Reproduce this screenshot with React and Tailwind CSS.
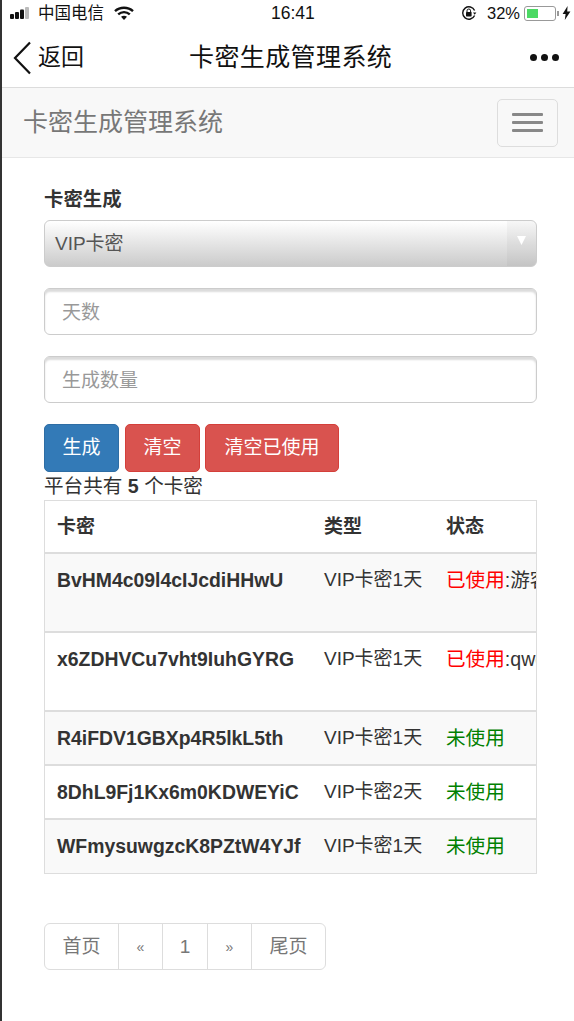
const rows = [
  { card: 'BvHM4c09l4cIJcdiHHwU', type: 'VIP卡密1天', used: '游客1', tall: true, odd: true },
  { card: 'x6ZDHVCu7vht9IuhGYRG', type: 'VIP卡密1天', used: 'qwe', tall: true },
  { card: 'R4iFDV1GBXp4R5lkL5th', type: 'VIP卡密1天', odd: true },
  { card: '8DhL9Fj1Kx6m0KDWEYiC', type: 'VIP卡密2天' },
  { card: 'WFmysuwgzcK8PZtW4YJf', type: 'VIP卡密1天', odd: true },
];

function StatusBar() {
  return (
    <div className="flex h-[28px] items-center pl-[8px] pr-[3px] pb-[2px] text-[16.5px] text-[#111]">
      <div className="flex w-[261px] items-center">
        <svg width="23" height="14" viewBox="0 0 23 14" className="mr-[5px]">
          <rect x="0" y="8" width="4" height="5" rx="1" fill="#111" />
          <rect x="5" y="6" width="4" height="7" rx="1" fill="#111" />
          <rect x="10" y="3.5" width="4" height="9.5" rx="1" fill="#111" />
          <rect x="15" y="1" width="4" height="12" rx="1" fill="#bbb" />
        </svg>
        <span>中国电信</span>
        <svg width="20" height="15" viewBox="0 0 20 15" className="ml-[10px]" fill="none" stroke="#111" strokeWidth="2.4">
          <path d="M1 5.2C6 .6 14 .6 19 5.2" />
          <path d="M4.2 8.4c3.3-3 8.3-3 11.6 0" />
          <path d="M10 14l3-3.2c-1.7-1.5-4.3-1.5-6 0z" fill="#111" stroke="none" />
        </svg>
      </div>
      <span className="w-[44px] whitespace-nowrap text-[17.5px] font-medium">16:41</span>
      <div className="ml-auto flex items-center">
        <svg width="16" height="16" viewBox="0 0 16 16" fill="none" stroke="#111" strokeWidth="1.4">
          <path d="M13.6 10.5A6.2 6.2 0 1 1 13.6 5.5" />
          <path d="M12 7.6h3.4l-1.7 2.2z" fill="#111" stroke="none" />
          <rect x="5" y="7" width="5.6" height="4.4" rx=".6" fill="#111" stroke="none" />
          <path d="M6 7V5.8a1.8 1.8 0 0 1 3.6 0V7" strokeWidth="1" />
        </svg>
        <span className="ml-[10px]">32%</span>
        <div className="ml-[4px] flex h-[15px] w-[32px] items-center rounded-[3px] border border-[#999] p-[2px]">
          <div className="h-full w-[11px] bg-[#4cd964]" />
        </div>
        <div className="ml-[1px] h-[5px] w-[2px] bg-[#999]" />
        <svg width="9" height="14" viewBox="0 0 9 14" className="ml-[3px]">
          <path d="M5.6 0L.6 8h3L2.8 14 8.4 5.6h-3.2z" fill="#111" />
        </svg>
      </div>
    </div>
  );
}

function TopNav() {
  return (
    <div className="flex h-[60px] items-center border-b border-[#dcdcdc] pl-[10px] pr-[15px]">
      <svg width="20" height="34" viewBox="0 0 20 34" fill="none" stroke="#111" strokeWidth="2.2">
        <path d="M18 1.5L3 17l15 15.5" />
      </svg>
      <span className="ml-[6px] w-[151px] text-[23px] text-[#111]">返回</span>
      <span className="whitespace-nowrap text-[25px] tracking-[0.4px] text-[#111]">卡密生成管理系统</span>
      <div className="ml-auto flex gap-[4px]">
        <div className="h-[7px] w-[7px] rounded-full bg-[#111]" />
        <div className="h-[7px] w-[7px] rounded-full bg-[#111]" />
        <div className="h-[7px] w-[7px] rounded-full bg-[#111]" />
      </div>
    </div>
  );
}

function Navbar() {
  return (
    <div className="flex h-[70px] items-center justify-between border-b border-[#e7e7e7] bg-[#f8f8f8] pl-[21px] pr-[16px]">
      <span className="whitespace-nowrap text-[25px] text-[#777]">卡密生成管理系统</span>
      <button className="flex h-[48px] w-[61px] flex-col items-center justify-center gap-[5px] rounded-[5px] border border-[#ddd]">
        <span className="h-[3px] w-[31px] rounded-[1px] bg-[#888]" />
        <span className="h-[3px] w-[31px] rounded-[1px] bg-[#888]" />
        <span className="h-[3px] w-[31px] rounded-[1px] bg-[#888]" />
      </button>
    </div>
  );
}

function TextField({ placeholder }) {
  return (
    <input
      placeholder={placeholder}
      className="block h-[47px] w-full rounded-[6px] border border-[#ccc] px-[17px] pt-[2px] text-[19px] shadow-[inset_0_3px_2px_rgba(0,0,0,0.14)] outline-none placeholder:text-[#999]"
    />
  );
}

function CardRow({ row }) {
  return (
    <tr className={row.odd ? 'bg-[#f9f9f9]' : 'bg-white'}>
      <td className={`border-t-2 border-[#ddd] pl-[12px] pt-[12px] align-top text-[19.4px] font-bold whitespace-nowrap ${row.tall ? 'h-[79px]' : 'h-[54px]'}`}>
        {row.card}
      </td>
      <td className="border-t-2 border-[#ddd] pl-[12px] pt-[12px] align-top whitespace-nowrap">{row.type}</td>
      <td className="border-t-2 border-[#ddd] pl-[12px] pt-[12px] align-top text-[19.6px] whitespace-nowrap">
        {row.used ? (
          <>
            <span className="text-[#f00]">已使用</span>:{row.used}
          </>
        ) : (
          <span className="text-[#008000]">未使用</span>
        )}
      </td>
    </tr>
  );
}

function Pagination() {
  const items = [
    { label: '首页', cls: 'w-[75px] rounded-l-[6px] text-[19px]' },
    { label: '«', cls: '-ml-px w-[45px] text-[14px]' },
    { label: '1', cls: '-ml-px w-[46px] text-[19px]' },
    { label: '»', cls: '-ml-px w-[45px] text-[14px]' },
    { label: '尾页', cls: '-ml-px w-[75px] rounded-r-[6px] text-[19px]' },
  ];
  return (
    <div className="mt-[49px] flex">
      {items.map((item) => (
        <a
          key={item.label}
          className={`flex h-[47px] items-center justify-center border border-[#ddd] pt-[2px] text-[#777] ${item.cls}`}
        >
          {item.label}
        </a>
      ))}
    </div>
  );
}

export default function App() {
  return (
    <div className="flex min-h-[1021px] bg-white font-['Liberation_Sans','Noto_Sans_CJK_SC',sans-serif]">
      <div className="w-[2px] shrink-0 bg-[#333]" />
      <div className="min-w-0 flex-1">
        <StatusBar />
        <TopNav />
        <Navbar />
        <div className="px-[42px] pt-[30px] pr-[37px] text-[19px] text-[#333]">
          <label className="block h-[25px] text-[19.4px] font-bold leading-[23px]">卡密生成</label>
          <div className="mt-[7px] flex h-[47px] items-stretch overflow-hidden rounded-[6px] border border-[#ccc] bg-gradient-to-b from-white to-[#cbcbcb] text-[#555]">
            <span className="flex flex-1 items-center pl-[10px] pt-[1px]">VIP卡密</span>
            <span className="flex w-[29px] justify-center bg-black/[0.03] pt-[15px]">
              <svg width="11" height="9" viewBox="0 0 12 10">
                <path d="M1 0h10L6 10z" fill="#fff" />
              </svg>
            </span>
          </div>
          <div className="mt-[21px]">
            <TextField placeholder="天数" />
          </div>
          <div className="mt-[21px]">
            <TextField placeholder="生成数量" />
          </div>
          <div className="mt-[21px] flex gap-[6px] text-white">
            <button className="h-[48px] w-[75px] rounded-[5px] border border-[#2e6da4] bg-[#337ab7] pt-[1px]">生成</button>
            <button className="h-[48px] w-[75px] rounded-[5px] border border-[#d43f3a] bg-[#d9534f] pt-[1px]">清空</button>
            <button className="-ml-px h-[48px] w-[134px] rounded-[5px] border border-[#d43f3a] bg-[#d9534f] pt-[1px]">清空已使用</button>
          </div>
          <p className="h-[28px] text-[19.6px] leading-[28px]">
            平台共有 <b>5</b> 个卡密
          </p>
          <div className="overflow-hidden border border-[#ddd]">
            <table className="w-full table-fixed border-collapse text-left">
              <colgroup>
                <col className="w-[267px]" />
                <col className="w-[122px]" />
                <col />
              </colgroup>
              <thead>
                <tr className="h-[52px]">
                  <th className="pl-[12px] pt-[2px] font-bold">卡密</th>
                  <th className="pl-[12px] pt-[2px] font-bold">类型</th>
                  <th className="pl-[12px] pt-[2px] font-bold">状态</th>
                </tr>
              </thead>
              <tbody>
                {rows.map((row) => (
                  <CardRow key={row.card} row={row} />
                ))}
              </tbody>
            </table>
          </div>
          <Pagination />
        </div>
      </div>
    </div>
  );
}
